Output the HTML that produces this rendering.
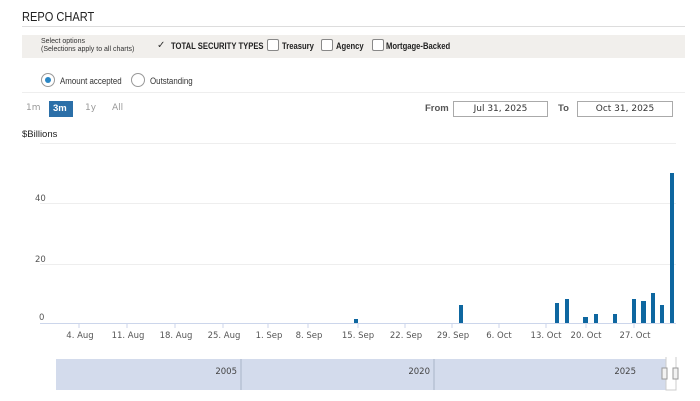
<!DOCTYPE html>
<html><head><style>
body{margin:0;width:700px;height:401px;background:#fff;font-family:"Liberation Sans",sans-serif;position:relative;overflow:hidden}
.a{position:absolute;white-space:nowrap}
.cb{position:absolute;width:10px;height:10px;border:1px solid #888;border-radius:2px;background:#fff}
.n{font-family:"DejaVu Sans",sans-serif;font-size:8.5px;color:#555}
</style></head><body>
<div class="a" style="left:22px;top:9px;font-size:13px;color:#222;transform:scaleX(.85);transform-origin:left">REPO CHART</div>
<div class="a" style="left:22px;top:26px;width:663px;height:1px;background:#ddd"></div>
<div class="a" style="left:22px;top:35px;width:663px;height:23px;background:#f1efec"></div>
<div class="a" style="left:41px;top:38px;font-size:7px;line-height:7.5px;color:#333">Select options<br>(Selections apply to all charts)</div>
<div class="a" style="left:157px;top:40px;font-size:10px;color:#333">✓</div>
<div class="a" style="left:171px;top:41px;font-size:9px;font-weight:bold;color:#222;transform:scaleX(.85);transform-origin:left">TOTAL SECURITY TYPES</div>
<div class="cb" style="left:267px;top:39px"></div>
<div class="a" style="left:282px;top:41px;font-size:9px;font-weight:bold;color:#222;transform:scaleX(.85);transform-origin:left">Treasury</div>
<div class="cb" style="left:321px;top:39px"></div>
<div class="a" style="left:336px;top:41px;font-size:9px;font-weight:bold;color:#222;transform:scaleX(.85);transform-origin:left">Agency</div>
<div class="cb" style="left:372px;top:39px"></div>
<div class="a" style="left:386px;top:41px;font-size:9px;font-weight:bold;color:#222;transform:scaleX(.85);transform-origin:left">Mortgage-Backed</div>
<div class="a" style="left:41px;top:73px;width:12px;height:12px;border:1px solid #999;border-radius:50%"></div>
<div class="a" style="left:45px;top:77px;width:6px;height:6px;background:#2a86c4;border-radius:50%"></div>
<div class="a" style="left:60px;top:76px;font-size:9px;color:#333;transform:scaleX(.88);transform-origin:left">Amount accepted</div>
<div class="a" style="left:131px;top:73px;width:12px;height:12px;border:1px solid #999;border-radius:50%"></div>
<div class="a" style="left:150px;top:76px;font-size:9px;color:#333;transform:scaleX(.88);transform-origin:left">Outstanding</div>
<div class="a" style="left:22px;top:92px;width:663px;height:1px;background:#eee"></div>
<div class="a n" style="left:26px;top:103px;color:#999;font-size:9px">1m</div>
<div class="a" style="left:49px;top:101px;width:24px;height:16px;background:#2b6fa8"></div>
<div class="a" style="left:53px;top:103px;font-size:9.5px;font-weight:bold;color:#fff">3m</div>
<div class="a n" style="left:85px;top:103px;color:#999;font-size:9px">1y</div>
<div class="a n" style="left:112px;top:103px;color:#999;font-size:9px">All</div>
<div class="a" style="left:425px;top:103px;font-size:9.5px;font-weight:bold;color:#555">From</div>
<div class="a n" style="left:453px;top:101px;width:95px;height:16px;border:1px solid #aaa;box-sizing:border-box;text-align:center;line-height:14px;font-size:9px;color:#333">Jul 31, 2025</div>
<div class="a" style="left:558px;top:103px;font-size:9.5px;font-weight:bold;color:#555">To</div>
<div class="a n" style="left:577px;top:101px;width:96px;height:16px;border:1px solid #aaa;box-sizing:border-box;text-align:center;line-height:14px;font-size:9px;color:#333">Oct 31, 2025</div>
<div class="a" style="left:22px;top:129px;font-size:9.5px;color:#222">$Billions</div>
<div class="a" style="left:40px;top:143px;width:636px;height:1px;background:#eee"></div>
<div class="a" style="left:40px;top:203px;width:636px;height:1px;background:#eee"></div>
<div class="a" style="left:40px;top:264px;width:636px;height:1px;background:#eee"></div>
<div class="a" style="left:40px;top:323px;width:636px;height:1px;background:#ccd6eb"></div>
<div class="a n" style="left:35px;top:194px">40</div>
<div class="a n" style="left:35px;top:255px">20</div>
<div class="a n" style="left:39px;top:313px">0</div>
<svg class="a" style="left:0;top:0" width="700" height="401">
<g fill="#0e67a0">
<rect x="354" y="319" width="4" height="4"/>
<rect x="459" y="305" width="4" height="18"/>
<rect x="555" y="303" width="4" height="20"/>
<rect x="565" y="299" width="4" height="24"/>
<rect x="583" y="317" width="5" height="6"/>
<rect x="594" y="314" width="4" height="9"/>
<rect x="613" y="314" width="4" height="9"/>
<rect x="632" y="299" width="4" height="24"/>
<rect x="641" y="301" width="5" height="22"/>
<rect x="651" y="293" width="4" height="30"/>
<rect x="660" y="305" width="4" height="18"/>
<rect x="670" y="173" width="4" height="150"/>
</g>
<g stroke="#ccd6eb"><path d="M79 323v5M127 323v5M175 323v5M223 323v5M268 323v5M308 323v5M358 323v5M405 323v5M452 323v5M499 323v5M546 323v5M586 323v5M634 323v5"/></g>
<g font-family="DejaVu Sans" font-size="8.5" fill="#555" text-anchor="middle">
<text x="80" y="338">4. Aug</text><text x="128" y="338">11. Aug</text><text x="176" y="338">18. Aug</text><text x="224" y="338">25. Aug</text><text x="269" y="338">1. Sep</text><text x="309" y="338">8. Sep</text><text x="358" y="338">15. Sep</text><text x="406" y="338">22. Sep</text><text x="453" y="338">29. Sep</text><text x="499" y="338">6. Oct</text><text x="546" y="338">13. Oct</text><text x="586" y="338">20. Oct</text><text x="635" y="338">27. Oct</text>
</g>
<rect x="56" y="359" width="610" height="31" fill="#d3dbec"/>
<path d="M241 359v31M434 359v31" stroke="#aab4c8"/>
<path d="M666 357v33h10v-33" fill="none" stroke="#ccc"/>
<g font-family="DejaVu Sans" font-size="8.5" fill="#444" text-anchor="end">
<text x="237" y="374">2005</text><text x="430" y="374">2020</text><text x="636" y="374">2025</text></g>
<rect x="662" y="368" width="5" height="11" fill="#f2f2f2" stroke="#999"/>
<rect x="673" y="368" width="5" height="11" fill="#f2f2f2" stroke="#999"/>
</svg>
</body></html>
